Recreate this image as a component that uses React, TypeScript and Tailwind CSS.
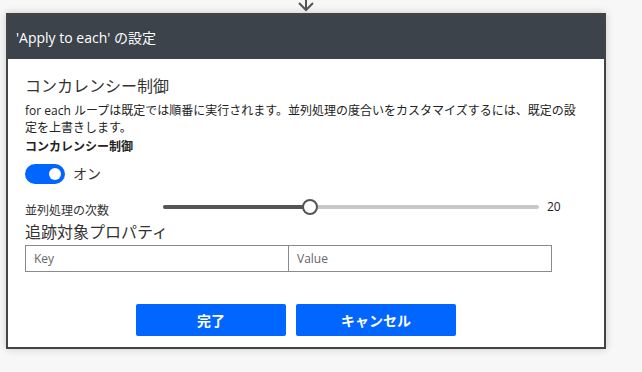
import React from "react";

const font = { fontFamily: '"Open Sans", "Noto Sans CJK JP", sans-serif' };

export default function App() {
  return (
    <div className="w-[642px] h-[372px] bg-[#f7f7f7] overflow-hidden" style={font}>
      {/* connector arrow */}
      <div className="w-[600px] ml-[6px] h-[13px] flex justify-center">
        <svg width="18" height="13" viewBox="0 0 18 13" className="-mt-[1px]">
          <path d="M9 0 V11 M2 4 L9 11 L16 4" stroke="#555" strokeWidth="2" fill="none" />
        </svg>
      </div>

      <div className="w-[600px] ml-[6px] h-[336px] border-2 border-[#444] bg-white shadow-[0_0_8px_rgba(0,0,0,0.18)] flex flex-col">
        <div className="h-[44px] bg-[#3c434a] flex items-center px-[8px] text-white text-[14px]">
          'Apply to each' の設定
        </div>

        <div className="flex-1 flex flex-col px-[17px] pt-[16px] text-[#333]">
          <div className="text-[16px] leading-[22px]">コンカレンシー制御</div>
          <p className="text-[12px] leading-[17px] mt-[5px] text-[#222]">
            for each ループは既定では順番に実行されます。並列処理の度合いをカスタマイズするには、既定の設定を上書きします。
          </p>
          <div className="text-[12px] leading-[17px] font-semibold mt-[2px] text-[#222]">コンカレンシー制御</div>

          <div className="flex items-center gap-[8px] mt-[8px]">
            <div className="w-[40px] h-[20px] rounded-full bg-[#0066ff] flex items-center justify-end px-[4px]">
              <div className="w-[12px] h-[12px] rounded-full bg-white" />
            </div>
            <span className="text-[14px] text-[#333]">オン</span>
          </div>

          <div className="flex items-center mt-[12px] h-[22px]">
            <span className="text-[12px] w-[138px] mt-[7px]">並列処理の次数</span>
            <div className="relative w-[376px] h-[4px] rounded-full bg-[#c8c8c8]">
              <div className="h-[4px] w-[146px] rounded-full bg-[#555]" />
              <div className="absolute left-[139px] -top-[6px] w-[16px] h-[16px] rounded-full bg-white border-2 border-[#555]" />
            </div>
            <span className="text-[12px] ml-[8px] text-[#222]">20</span>
          </div>

          <div className="text-[16px] leading-[22px] mt-[3px]">追跡対象プロパティ</div>
          <div className="flex mt-[2px]">
            <div className="w-[264px] h-[27px] border border-[#8a8a8a] flex items-center px-[8px] text-[12px] text-[#666]">Key</div>
            <div className="w-[264px] h-[27px] border border-[#8a8a8a] -ml-[1px] flex items-center px-[8px] text-[12px] text-[#666]">Value</div>
          </div>

          <div className="flex justify-center gap-[10px] mt-[32px] -ml-[20px]">
            <button className="w-[150px] h-[32px] rounded-[2px] bg-[#0066ff] text-white text-[14px] font-bold">完了</button>
            <button className="w-[160px] h-[32px] rounded-[2px] bg-[#0066ff] text-white text-[14px] font-bold">キャンセル</button>
          </div>
        </div>
      </div>
    </div>
  );
}
